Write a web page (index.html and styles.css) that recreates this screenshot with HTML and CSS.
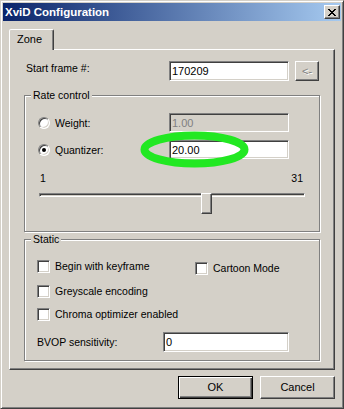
FILE: index.html
```html
<!DOCTYPE html>
<html lang="en">
<head>
    <meta charset="UTF-8">
    <title>XviD Configuration</title>
    <link rel="stylesheet" href="styles.css">
</head>
<body>
    <div class="window">
        <div class="titlebar">
            <span class="title">XviD Configuration</span>
            <button class="close-btn" type="button" aria-label="Close">
                <svg width="8" height="7" viewBox="0 0 8 7" shape-rendering="crispEdges">
                    <path d="M0 0h2v1H0zM6 0h2v1H6zM1 1h2v1H1zM5 1h2v1H5zM2 2h4v1H2zM3 3h2v1H3zM2 4h4v1H2zM1 5h2v1H1zM5 5h2v1H5zM0 6h2v1H0zM6 6h2v1H6z" fill="#000"/>
                </svg>
            </button>
        </div>

        <div class="tabs">
            <div class="tab active">Zone</div>
        </div>

        <div class="panel">
            <div class="start-row">
                <label class="start-label" for="startFrame">Start frame #:</label>
                <input class="edit start-edit" id="startFrame" type="text" value="170209">
                <button class="btn small-btn" type="button" disabled>&lt;-</button>
            </div>

            <div class="group rate-group">
                <div class="group-title">Rate control</div>
                <div class="radio-row">
                    <span class="radio"></span>
                    <span class="radio-label">Weight:</span>
                    <input class="edit rate-edit" type="text" value="1.00" disabled>
                </div>
                <div class="radio-row quant-row">
                    <span class="radio checked"></span>
                    <span class="radio-label">Quantizer:</span>
                    <input class="edit rate-edit" type="text" value="20.00">
                </div>
                <div class="scale-labels">
                    <span>1</span>
                    <span>31</span>
                </div>
                <div class="slider">
                    <div class="slider-track"></div>
                    <div class="slider-thumb" style="left: 162px;"></div>
                </div>
            </div>

            <div class="group static-group">
                <div class="group-title">Static</div>
                <div class="check-row">
                    <div class="check-item wide">
                        <span class="checkbox"></span>
                        <span>Begin with keyframe</span>
                    </div>
                    <div class="check-item cartoon">
                        <span class="checkbox"></span>
                        <span>Cartoon Mode</span>
                    </div>
                </div>
                <div class="check-row spaced">
                    <div class="check-item">
                        <span class="checkbox"></span>
                        <span>Greyscale encoding</span>
                    </div>
                </div>
                <div class="check-row spaced">
                    <div class="check-item">
                        <span class="checkbox"></span>
                        <span>Chroma optimizer enabled</span>
                    </div>
                </div>
                <div class="bvop-row">
                    <label class="bvop-label" for="bvop">BVOP sensitivity:</label>
                    <input class="edit bvop-edit" id="bvop" type="text" value="0">
                </div>
            </div>
        </div>

        <div class="dialog-buttons">
            <button class="btn dialog-btn default" type="button">OK</button>
            <button class="btn dialog-btn" type="button">Cancel</button>
        </div>

        <!-- highlight drawn over the quantizer field -->
        <svg class="highlight" width="109" height="37" viewBox="0 0 109 37">
            <ellipse cx="54.5" cy="18.5" rx="50" ry="14" fill="none" stroke="#22e822" stroke-width="8"/>
        </svg>
    </div>
</body>
</html>
```

FILE: styles.css
```css
:root {
    --face: #d4d0c8;
    --shadow: #808080;
    --dark: #404040;
    --light: #ffffff;
}

* {
    margin: 0;
    padding: 0;
    box-sizing: border-box;
}

body {
    font-family: "Liberation Sans", Arial, sans-serif;
    font-size: 10.5px;
    line-height: 13px;
    color: #000;
    background-color: var(--face);
}

.window {
    position: relative;
    width: 344px;
    height: 409px;
    padding: 2px;
    display: flex;
    flex-direction: column;
    background-color: var(--face);
    border: 1px solid;
    border-color: var(--face) var(--dark) var(--dark) var(--face);
    box-shadow: inset 1px 1px var(--light), inset -1px -1px var(--shadow);
}

/* title bar */
.titlebar {
    height: 18px;
    display: flex;
    align-items: center;
    padding-left: 2px;
    background: linear-gradient(to right, #0a246a, #a6caf0);
}

.title {
    color: #fff;
    font-weight: bold;
    font-size: 11.5px;
}

.close-btn {
    width: 16px;
    height: 14px;
    margin-left: auto;
    margin-right: 1px;
    display: flex;
    align-items: center;
    justify-content: center;
    background-color: var(--face);
    border: 1px solid;
    border-color: var(--light) var(--dark) var(--dark) var(--light);
    box-shadow: inset -1px -1px var(--shadow);
}

/* tab strip */
.tabs {
    display: flex;
    margin: 8px 6px -1px;
}

.tab {
    position: relative;
    z-index: 1;
    width: 45px;
    height: 21px;
    padding: 3px 0 0 7px;
    font-size: 11px;
    background-color: var(--face);
    border: 1px solid;
    border-bottom: none;
    border-color: var(--light) var(--dark) transparent var(--light);
    border-radius: 2px 2px 0 0;
    box-shadow: inset -1px 0 var(--shadow);
}

.panel {
    height: 321px;
    margin: 0 6px;
    padding: 11px 14px 0;
    border: 1px solid;
    border-color: var(--light) var(--dark) var(--dark) var(--light);
    box-shadow: inset -1px -1px var(--shadow);
}

/* sunken edit fields */
.edit {
    height: 19px;
    padding: 0 2px;
    font: inherit;
    font-size: 11px;
    color: #000;
    background-color: #fff;
    border: 1px solid;
    border-color: var(--shadow) var(--light) var(--light) var(--shadow);
    box-shadow: inset 1px 1px var(--dark), inset -1px -1px var(--face);
    outline: none;
}

.edit:disabled {
    background-color: var(--face);
    color: var(--shadow);
}

.btn {
    font: inherit;
    font-size: 11px;
    color: #000;
    background-color: var(--face);
    border: 1px solid;
    border-color: var(--light) var(--dark) var(--dark) var(--light);
    box-shadow: inset -1px -1px var(--shadow);
}

.btn:disabled {
    color: var(--shadow);
    text-shadow: 1px 1px var(--light);
}

.start-row {
    display: flex;
    height: 20px;
}

.start-label {
    width: 145px;
    padding: 1px 0 0 2px;
}

.start-edit {
    width: 120px;
    height: 20px;
}

.small-btn {
    width: 24px;
    height: 20px;
    margin-left: 6px;
}

/* etched group boxes */
.group {
    border: 1px solid var(--shadow);
    box-shadow: 1px 1px var(--light), inset 1px 1px var(--light);
}

.group-title {
    width: fit-content;
    margin: -7px 0 0 6px;
    padding: 0 2px;
    background-color: var(--face);
}

.rate-group {
    margin-top: 14px;
    padding-bottom: 17px;
}

.radio-row {
    display: flex;
    height: 19px;
    margin-top: 11px;
    padding-left: 13px;
}

.quant-row {
    margin-top: 8px;
}

.radio {
    position: relative;
    width: 12px;
    height: 12px;
    margin: 4px 5px 0 0;
    border-radius: 50%;
    background-color: #fff;
    border: 1px solid;
    border-color: var(--shadow) var(--light) var(--light) var(--shadow);
    box-shadow: inset 1px 1px var(--dark), inset -1px -1px var(--face);
}

.radio.checked::after {
    content: "";
    position: absolute;
    left: 3px;
    top: 3px;
    width: 4px;
    height: 4px;
    border-radius: 50%;
    background-color: #000;
}

.radio-label {
    width: 114px;
    padding-top: 4px;
}

.rate-edit {
    width: 120px;
}

.scale-labels {
    display: flex;
    justify-content: space-between;
    margin-top: 13px;
    padding: 0 16px 0 15px;
}

.slider {
    position: relative;
    width: 266px;
    height: 21px;
    margin: 1px 0 0 14px;
}

.slider-track {
    height: 4px;
    margin-top: 8px;
    border: 1px solid;
    border-color: var(--shadow) var(--light) var(--light) var(--shadow);
    box-shadow: inset 1px 1px var(--dark);
}

.slider-thumb {
    position: absolute;
    top: 0;
    width: 11px;
    height: 21px;
    background-color: var(--face);
    border: 1px solid;
    border-color: var(--light) var(--dark) var(--dark) var(--light);
    box-shadow: inset -1px -1px var(--shadow);
}

.static-group {
    margin-top: 7px;
    padding-bottom: 8px;
}

.check-row {
    display: flex;
    align-items: flex-start;
    margin-top: 14px;
    padding-left: 12px;
}

.check-row.spaced {
    margin-top: 10px;
}

.check-item {
    display: flex;
    height: 13px;
}

.check-item.wide {
    width: 158px;
}

.check-item.cartoon {
    margin-top: 2px;
}

.checkbox {
    width: 13px;
    height: 13px;
    margin-right: 5px;
    background-color: #fff;
    border: 1px solid;
    border-color: var(--shadow) var(--light) var(--light) var(--shadow);
    box-shadow: inset 1px 1px var(--dark), inset -1px -1px var(--face);
}

.bvop-row {
    display: flex;
    height: 20px;
    margin-top: 11px;
    padding-left: 12px;
}

.bvop-label {
    width: 126px;
    padding-top: 4px;
}

.bvop-edit {
    width: 126px;
    height: 20px;
}

/* OK / Cancel */
.dialog-buttons {
    display: flex;
    justify-content: flex-end;
    gap: 7px;
    margin: 6px 6px 0;
}

.dialog-btn {
    width: 75px;
    height: 23px;
}

.dialog-btn.default {
    border-color: #000;
    box-shadow: inset 1px 1px var(--light), inset -1px -1px var(--dark), inset -2px -2px var(--shadow);
}

.highlight {
    position: absolute;
    left: 139px;
    top: 130px;
}
```
